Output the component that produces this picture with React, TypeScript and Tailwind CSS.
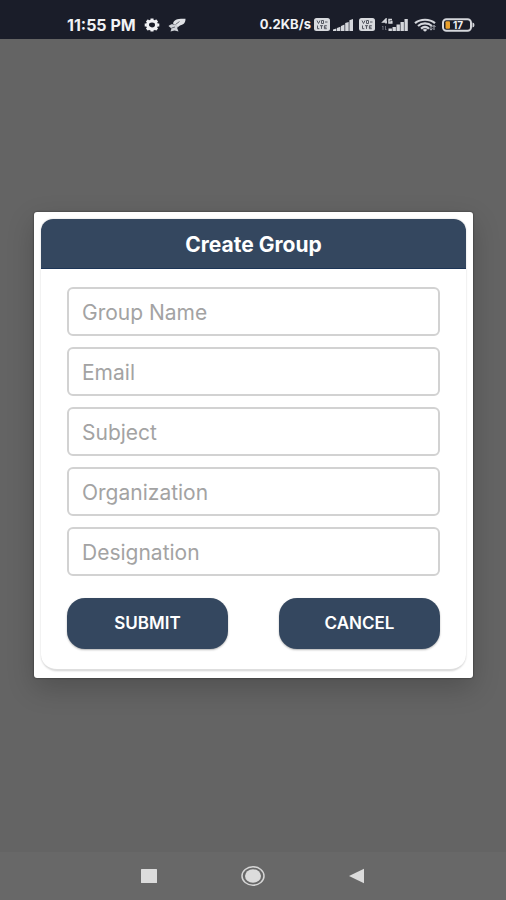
const fields = [
  { name: "groupName", label: "Group Name", type: "text" },
  { name: "email", label: "Email", type: "email" },
  { name: "subject", label: "Subject", type: "text" },
  { name: "organization", label: "Organization", type: "text" },
  { name: "designation", label: "Designation", type: "text" },
];

function GearIcon() {
  return (
    <svg viewBox="0 0 16 14" className="h-[14px] w-4" aria-hidden="true">
      <ellipse cx="8" cy="7" rx="4.5" ry="3.9" fill="none" stroke="#f1f2f5" strokeWidth="3" />
      <path
        d="M8 .6v2M8 11.400v2M.7 7h2M13.300 7h2M2.900 2.400l1.600 1.400M11.500 10.200l1.600 1.400M13.100 2.400l-1.600 1.400M4.500 10.200l-1.600 1.400"
        stroke="#f1f2f5"
        strokeWidth="3"
      />
    </svg>
  );
}

function BirdIcon() {
  return (
    <svg viewBox="0 0 18 14" className="h-[14px] w-[18px]" aria-hidden="true">
      <path d="M5 5.500C6 1.500 9.500.5 17.500.8c0 4-1.500 5.700-5.500 6.700L10 9z" fill="#dfe1e5" />
      <path d="M.5 8C3.500 5.500 6 6 10 8.300l-.8 1.900 1.300 3.300-4-1-4 1 1-3z" fill="#cfd2d8" />
      <path d="M7.500 6.500l4-3M3.500 10l3.500-1" stroke="#5a5d68" strokeWidth=".9" />
    </svg>
  );
}

function VolteIcon() {
  return (
    <svg viewBox="0 0 16 13" className="h-[13px] w-4" aria-hidden="true">
      <rect width="16" height="13" rx="2.500" fill="#d8dade" />
      <path
        d="M3 2.500l1.500 3L6 2.500M7.500 2.500h2v3h-2zM11 4h2.500M3.500 7.500v3.200h1.800M6 7.700h3M7.500 7.700v3.200M12.800 7.700h-2.400v3h2.400M10.400 9.200h2"
        fill="none"
        stroke="#555862"
        strokeWidth="1"
      />
    </svg>
  );
}

function SignalIcon() {
  return (
    <svg viewBox="0 0 20 12" className="h-3 w-5" aria-hidden="true">
      <path
        d="M0 12v-1.500l3.400-1V12zM4 12V9l3.400-1.300V12zM8 12V7l3.500-1.500V12zM12.200 12V4l3.500-1v9zM16.400 12V1.200L20 0v12z"
        fill="#d5d7dc"
      />
    </svg>
  );
}

function Signal4gIcon() {
  return (
    <svg viewBox="0 0 27 14" className="h-[14px] w-[27px]" aria-hidden="true">
      <path
        d="M5 5.500V1L2 4h4M11 1.500H8v3.500h2.800V3.500H9.300"
        fill="none"
        stroke="#d5d7dc"
        strokeWidth="1.500"
      />
      <path d="M2 8v4M1 9l1-1M4.500 8v4l1-1" fill="none" stroke="#686c78" strokeWidth="1" />
      <path
        d="M7.500 13v-2.500h3.400V13zM11.500 13V9h3.400v4zM15.500 13V6.500h3.400V13zM19.500 13V4h3.400v9zM23.500 13V1h3.300v12z"
        fill="#d5d7dc"
      />
    </svg>
  );
}

function WifiIcon() {
  return (
    <svg viewBox="0 0 22 14" className="h-[14px] w-[22px]" aria-hidden="true">
      <g fill="none" stroke="#d5d7dc" strokeWidth="2.200">
        <path d="M1 5.200C6.500.6 15.500.6 21 5.200" />
        <path d="M4 8c4-3.400 10-3.400 14 0" />
        <path d="M7 10.600c2.500-2 5.500-2 8 0" />
      </g>
      <path d="M8.500 11.800Q11 10 13.500 11.800L11 13.800z" fill="#d5d7dc" />
      <path
        d="M17 7.500v4.500M15.500 10.500l1.500 1.700 1.500-1.700M20 12V7.500M18.500 9L20 7.300 21.500 9"
        fill="none"
        stroke="#aeb1b9"
        strokeWidth="1"
      />
    </svg>
  );
}

function BatteryIcon() {
  return (
    <svg viewBox="0 0 33 14" className="h-[14px] w-[33px]" role="img" aria-label="Battery 17%">
      <rect x="1" y="1.200" width="28" height="11.600" rx="3.500" fill="#1a1d29" stroke="#d5d7dc" strokeWidth="2" />
      <path d="M30.500 4.500q2 .3 2 2.500t-2 2.500z" fill="#d5d7dc" />
      <rect x="3.500" y="3.300" width="4.500" height="7.400" rx="1" fill="#e9a02c" />
      <text x="16" y="10.600" textAnchor="middle" fontSize="10" fontWeight="700" fill="#f1f2f5">
        17
      </text>
    </svg>
  );
}

function StatusBar() {
  return (
    <header className="flex h-[39px] items-center justify-between bg-[#1a1d29] pt-[10px] pr-[31px] pl-[67px] font-bold text-[#f1f2f5]">
      <div className="flex items-center gap-2">
        <span className="text-base">11:55 PM</span>
        <GearIcon />
        <BirdIcon />
      </div>
      <div className="flex items-center">
        <span className="mr-[3px] text-[13px]">0.2KB/s</span>
        <div className="flex items-center gap-[6px]">
          <div className="flex items-center gap-[3px]">
            <VolteIcon />
            <SignalIcon />
          </div>
          <VolteIcon />
          <Signal4gIcon />
          <WifiIcon />
          <BatteryIcon />
        </div>
      </div>
    </header>
  );
}

function CreateGroupDialog() {
  return (
    <section
      role="dialog"
      aria-labelledby="dialog-title"
      className="w-full rounded-[3px] bg-white p-[7px] shadow-[0_0_2px_rgba(0,0,0,0.6),0_10px_28px_rgba(0,0,0,0.2)]"
    >
      <div className="rounded-t-xl rounded-b-2xl border-b-2 border-[#dedede] shadow-[0_0_2px_rgba(0,0,0,0.2)]">
        <h1
          id="dialog-title"
          className="flex h-[50px] items-center justify-center rounded-t-xl border-b border-[#1c3557] bg-[#34475f] pt-[3px] text-[21px] font-bold text-white"
        >
          Create Group
        </h1>
        <form className="px-[26px] pt-[18px] pb-5" onSubmit={(e) => e.preventDefault()}>
          <div className="flex flex-col gap-[11px]">
            {fields.map((field) => (
              <input
                key={field.name}
                name={field.name}
                type={field.type}
                aria-label={field.label}
                placeholder={field.label}
                className="h-[49px] w-full rounded-md border-2 border-[#d2d2d2] px-[13px] pt-0.5 text-[21px] text-[#333333] outline-none placeholder:text-[#a3a3a3]"
              />
            ))}
          </div>
          <div className="mt-[22px] grid grid-cols-2 gap-[51px]">
            <button
              type="submit"
              className="h-[51px] rounded-[18px] bg-[#34475f] pt-0.5 text-[17px] font-semibold text-white shadow-[0_1px_2px_rgba(0,0,0,0.3)]"
            >
              SUBMIT
            </button>
            <button
              type="button"
              className="h-[51px] rounded-[18px] bg-[#34475f] pt-0.5 text-[17px] font-semibold text-white shadow-[0_1px_2px_rgba(0,0,0,0.3)]"
            >
              CANCEL
            </button>
          </div>
        </form>
      </div>
    </section>
  );
}

function NavigationBar() {
  return (
    <nav className="flex h-12 items-center justify-center gap-[84px] bg-[#686868]">
      <button type="button" aria-label="Recent apps">
        <svg viewBox="0 0 16 14" className="h-[14px] w-4">
          <rect width="16" height="14" rx=".5" fill="#dcdcdc" />
        </svg>
      </button>
      <button type="button" aria-label="Home">
        <svg viewBox="0 0 24 20" className="h-5 w-6">
          <ellipse cx="12" cy="10" rx="11" ry="9.200" fill="none" stroke="#d6d6d6" strokeWidth="1.500" />
          <ellipse cx="12" cy="10" rx="8" ry="6.800" fill="#dcdcdc" />
        </svg>
      </button>
      <button type="button" aria-label="Back">
        <svg viewBox="0 0 16 16" className="size-4">
          <path d="M0 8L15 .8v14.400z" fill="#dcdcdc" />
        </svg>
      </button>
    </nav>
  );
}

export default function App() {
  return (
    <div className="flex min-h-screen flex-col bg-[#646464] font-['Inter',sans-serif]">
      <StatusBar />
      <main className="flex flex-1 items-center justify-center pr-[33px] pb-0.5 pl-[34px]">
        <CreateGroupDialog />
      </main>
      <NavigationBar />
    </div>
  );
}
